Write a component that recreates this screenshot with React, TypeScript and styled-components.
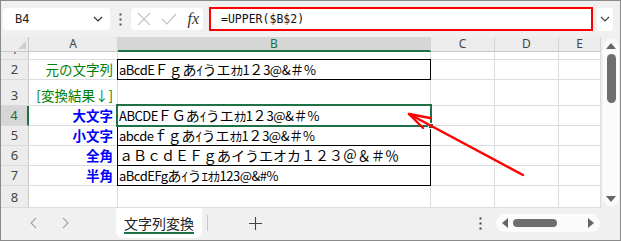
import styled, { createGlobalStyle } from "styled-components";

const GlobalStyle = createGlobalStyle`
  html, body { margin: 0; padding: 0; background: #fff; }
  body { font-family: "Noto Sans CJK JP", "Noto Sans", sans-serif; }
  * { box-sizing: border-box; }
`;

const GREEN = "#1e7145";

const Window = styled.div`
  width: 621px;
  height: 241px;
  border: 1px solid #8a8a8a;
  background: #f0f0f0;
  display: flex;
  flex-direction: column;
  overflow: hidden;
`;

const Toolbar = styled.div`
  height: 36px;
  flex: none;
  display: flex;
  align-items: center;
  padding-left: 2px;
  & > * { flex-shrink: 0; }
`;

const NameBox = styled.div`
  width: 107px;
  height: 22px;
  background: #fff;
  border-radius: 4px;
  display: flex;
  align-items: center;
  justify-content: space-between;
  padding: 0 7px 0 12px;
  font-family: "DejaVu Sans Mono", monospace;
  font-size: 12px;
  color: #222;
`;

const Dots = styled.div`
  width: 21px;
  display: flex;
  justify-content: center;
  color: #555;
`;

const FxBox = styled.div`
  width: 72px;
  height: 22px;
  background: #fff;
  border-radius: 4px;
  display: flex;
  align-items: center;
  justify-content: space-between;
  padding: 0 4px 0 6px;
`;

const FxLabel = styled.span`
  font-family: "Liberation Serif", serif;
  font-style: italic;
  font-size: 16px;
  color: #333;
  line-height: 1;
`;

const FormulaInput = styled.div`
  margin-left: 6px;
  width: 384px;
  height: 24px;
  border: 2px solid #ff0000;
  background: #fff;
  display: flex;
  align-items: center;
  padding-left: 10px;
  font-family: "DejaVu Sans Mono", monospace;
  font-size: 11.5px;
  color: #111;
`;

const ExpandBox = styled.div`
  margin-left: 4px;
  width: 16px;
  height: 23px;
  background: #fff;
  border-radius: 3px;
  display: flex;
  align-items: center;
  justify-content: center;
`;

const SheetArea = styled.div`
  height: 171px;
  flex: none;
  display: flex;
`;

const Grid = styled.div`
  position: relative;
  width: 600px;
  background: #fff;
  display: grid;
  grid-template-columns: 28px 89px 313px 64px 64px 42px;
  grid-template-rows: 15px 8px 20px 26px 20px 20px 20px 20px 22px;
`;

const Corner = styled.div`
  position: relative;
  background: #ececec;
  border-right: 1px solid #c8c8c8;
  border-bottom: 1px solid #c8c8c8;
  &::after {
    content: "";
    position: absolute;
    right: 2px;
    bottom: 2px;
    border-style: solid;
    border-width: 0 0 8px 8px;
    border-color: transparent transparent #cfcfcf transparent;
  }
`;

const ColHeader = styled.div<{ $selected?: boolean }>`
  background: ${({ $selected }) => ($selected ? "#d6d6d6" : "#ececec")};
  color: ${({ $selected }) => ($selected ? GREEN : "#444")};
  border-right: 1px solid #d4d4d4;
  border-bottom: ${({ $selected }) => ($selected ? `2px solid ${GREEN}` : "1px solid #c8c8c8")};
  display: flex;
  align-items: center;
  justify-content: center;
  font-family: "Noto Sans", sans-serif;
  font-size: 12px;
  line-height: 1;
`;

const RowHeader = styled.div<{ $selected?: boolean }>`
  background: ${({ $selected }) => ($selected ? "#d6d6d6" : "#ececec")};
  color: ${({ $selected }) => ($selected ? GREEN : "#444")};
  border-right: ${({ $selected }) => ($selected ? `2px solid ${GREEN}` : "1px solid #c8c8c8")};
  border-bottom: 1px solid #dadada;
  display: flex;
  align-items: flex-end;
  justify-content: center;
  overflow: hidden;
  font-family: "Noto Sans", sans-serif;
  font-size: 13px;
  line-height: 19px;
`;

const Cell = styled.div<{
  $right?: boolean;
  $bottom?: boolean;
  $color?: string;
  $bold?: boolean;
  $boxed?: boolean;
  $active?: boolean;
}>`
  position: relative;
  border-right: 1px solid #dcdcdc;
  border-bottom: 1px solid #dcdcdc;
  display: flex;
  align-items: ${({ $bottom }) => ($bottom ? "flex-end" : "center")};
  justify-content: ${({ $right }) => ($right ? "flex-end" : "flex-start")};
  padding: ${({ $right }) => ($right ? "0 4px 0 0" : "0 0 0 1px")};
  color: ${({ $color }) => $color || "#000"};
  font-weight: ${({ $bold }) => ($bold ? 700 : 400)};
  font-family: "Noto Sans CJK JP", sans-serif;
  font-size: ${({ $right }) => ($right ? "13.5px" : "14px")};
  line-height: 19px;
  white-space: nowrap;

  ${({ $boxed }) =>
    $boxed &&
    `&::before {
      content: "";
      position: absolute;
      top: -1px; left: -1px; right: -1px; bottom: -1px;
      border: 1px solid #000;
      pointer-events: none;
    }`}

  ${({ $active }) =>
    $active &&
    `&::after {
      content: "";
      position: absolute;
      top: -2px; left: -2px; right: -2px; bottom: -2px;
      border: 2px solid ${GREEN};
      z-index: 2;
      pointer-events: none;
    }`}
`;

// half-width glyphs (ascii, ｱｲｳ) are narrow in the sheet font
const Half = styled.span`
  font-size: 13px;
  letter-spacing: -0.5px;
`;

const FillHandle = styled.span`
  position: absolute;
  right: -4px;
  bottom: -4px;
  width: 6px;
  height: 6px;
  background: ${GREEN};
  border: 1px solid #fff;
  z-index: 3;
`;

const ArrowLayer = styled.svg`
  position: absolute;
  left: 0;
  top: 0;
  pointer-events: none;
  z-index: 4;
`;

const VScroll = styled.div`
  width: 19px;
  background: #f0f0f0;
  padding: 2px 1px 2px 2px;
`;

const VTrack = styled.div`
  height: 100%;
  background: #fbfbfb;
  border-radius: 8px;
  display: flex;
  flex-direction: column;
  align-items: center;
  padding: 3px 0 3px;
`;

const VThumb = styled.div`
  width: 9px;
  height: 49px;
  margin-top: 4px;
  border-radius: 5px;
  background: #6e6e6e;
`;

const Spacer = styled.div`
  flex: 1;
`;

const TabBar = styled.div`
  height: 32px;
  flex: none;
  display: flex;
  align-items: flex-start;
  padding-left: 16px;
  & > * { flex-shrink: 0; }
`;

const NavButton = styled.div`
  width: 32px;
  height: 30px;
  display: flex;
  align-items: center;
  justify-content: center;
`;

const SheetTab = styled.div`
  margin-left: 35px;
  width: 86px;
  height: 30px;
  background: #fff;
  border-radius: 0 0 7px 7px;
  display: flex;
  align-items: center;
  justify-content: center;
  font-size: 14px;
  color: #222;
`;

const TabLabel = styled.span`
  line-height: 17px;
  border-bottom: 2px solid ${GREEN};
  margin-top: 2px;
`;

const TabSeparator = styled.div`
  width: 1px;
  height: 16px;
  margin: 7px 0 0 5px;
  background: #c8c8c8;
`;

const AddButton = styled.div`
  width: 94px;
  height: 30px;
  display: flex;
  align-items: center;
  justify-content: center;
`;

const BarDots = styled.div`
  margin-left: 171px;
  width: 14px;
  height: 30px;
  display: flex;
  align-items: center;
  justify-content: center;
`;

const HScroll = styled.div`
  margin: 6px 0 0 9px;
  width: 104px;
  height: 18px;
  border-radius: 9px;
  background: #fbfbfb;
  display: flex;
  align-items: center;
  padding: 0 5px 0 5px;
`;

const HThumb = styled.div`
  width: 44px;
  height: 8px;
  margin-left: 4px;
  border-radius: 4px;
  background: #6e6e6e;
`;

const Chevron = ({ color = "#444" }: { color?: string }) => (
  <svg width="10" height="6" viewBox="0 0 10 6">
    <path d="M1 1l4 4 4-4" fill="none" stroke={color} strokeWidth="1.2" />
  </svg>
);

const VDots = ({ color = "#555" }: { color?: string }) => (
  <svg width="3" height="13" viewBox="0 0 3 13">
    <rect x="0.5" y="0.5" width="2" height="2" fill={color} />
    <rect x="0.5" y="5.5" width="2" height="2" fill={color} />
    <rect x="0.5" y="10.5" width="2" height="2" fill={color} />
  </svg>
);

const Tri = ({ dir }: { dir: "up" | "down" | "left" | "right" }) => {
  const pts = {
    up: "0,7 5,1 10,7",
    down: "0,1 5,7 10,1",
    left: "7,0 1,5 7,10",
    right: "1,0 7,5 1,10",
  }[dir];
  const vert = dir === "up" || dir === "down";
  return (
    <svg width={vert ? 10 : 8} height={vert ? 8 : 10} viewBox={vert ? "0 0 10 8" : "0 0 8 10"}>
      <polygon points={pts} fill="#666" />
    </svg>
  );
};

const isHalf = (ch: string) => {
  const c = ch.charCodeAt(0);
  return c < 0x2000 || (c >= 0xff61 && c <= 0xff9f);
};

// split a value into runs of half-width / full-width chars
const SheetText = ({ text }: { text: string }) => {
  const runs: { half: boolean; s: string }[] = [];
  for (const ch of text) {
    const h = isHalf(ch);
    const last = runs[runs.length - 1];
    if (last && last.half === h) last.s += ch;
    else runs.push({ half: h, s: ch });
  }
  return (
    <span>
      {runs.map((r, i) => (r.half ? <Half key={i}>{r.s}</Half> : <span key={i}>{r.s}</span>))}
    </span>
  );
};

type Row = {
  n: string;
  label?: string;
  labelColor?: string;
  bold?: boolean;
  bottom?: boolean;
  value?: string;
  active?: boolean;
};

const LBLUE = "#0000ff";
const LGREEN = "#008000";

const rows: Row[] = [
  { n: "1" },
  { n: "2", label: "元の文字列", labelColor: LGREEN, value: "aBcdEＦｇあｲうエｵｶ1２3@&＃%" },
  { n: "3", label: "[変換結果↓]", labelColor: LGREEN, bottom: true },
  { n: "4", label: "大文字", labelColor: LBLUE, bold: true, value: "ABCDEＦＧあｲうエｵｶ1２3@&＃%", active: true },
  { n: "5", label: "小文字", labelColor: LBLUE, bold: true, value: "abcdeｆｇあｲうエｵｶ1２3@&＃%" },
  { n: "6", label: "全角", labelColor: LBLUE, bold: true, value: "ａＢｃｄＥＦｇあイうエオカ１２３＠＆＃％" },
  { n: "7", label: "半角", labelColor: LBLUE, bold: true, value: "aBcdEFgあｲうｴｵｶ123@&#%" },
  { n: "8" },
];

const RowCells = ({ row }: { row: Row }) => (
  <>
    <RowHeader $selected={row.active}>
      <span>{row.n}</span>
    </RowHeader>
    <Cell $right $bottom={row.bottom} $color={row.labelColor} $bold={row.bold}>
      {row.label}
    </Cell>
    <Cell $boxed={!!row.value} $active={row.active}>
      {row.value && <SheetText text={row.value} />}
      {row.active && <FillHandle />}
    </Cell>
    <Cell />
    <Cell />
    <Cell />
  </>
);

export default function App() {
  return (
    <>
      <GlobalStyle />
      <Window>
        <Toolbar>
          <NameBox>
            <span>B4</span>
            <Chevron color="#333" />
          </NameBox>
          <Dots>
            <VDots />
          </Dots>
          <FxBox>
            <svg width="14" height="14" viewBox="0 0 14 14">
              <path d="M1 1l12 12M13 1L1 13" stroke="#c4c4c4" strokeWidth="1.2" />
            </svg>
            <svg width="16" height="14" viewBox="0 0 16 14">
              <path d="M1 7l5 5L15 2" fill="none" stroke="#c4c4c4" strokeWidth="1.2" />
            </svg>
            <FxLabel>fx</FxLabel>
          </FxBox>
          <FormulaInput>=UPPER($B$2)</FormulaInput>
          <ExpandBox>
            <Chevron />
          </ExpandBox>
        </Toolbar>

        <SheetArea>
          <Grid>
            <Corner />
            <ColHeader>A</ColHeader>
            <ColHeader $selected>B</ColHeader>
            <ColHeader>C</ColHeader>
            <ColHeader>D</ColHeader>
            <ColHeader>E</ColHeader>

            {rows.map((r) => (
              <RowCells key={r.n} row={r} />
            ))}

            <ArrowLayer width="600" height="171">
              <g stroke="#ff0000" strokeWidth="2.4" strokeLinecap="round" fill="none">
                <path d="M522 138L408 77" />
                <path d="M408 77L429 81" />
                <path d="M408 77L422 91" />
              </g>
            </ArrowLayer>
          </Grid>
          <VScroll>
            <VTrack>
              <Tri dir="up" />
              <VThumb />
              <Spacer />
              <Tri dir="down" />
            </VTrack>
          </VScroll>
        </SheetArea>

        <TabBar>
          <NavButton>
            <svg width="7" height="12" viewBox="0 0 7 12">
              <path d="M6 1L1 6l5 5" fill="none" stroke="#a8a8a8" strokeWidth="1.2" />
            </svg>
          </NavButton>
          <NavButton>
            <svg width="7" height="12" viewBox="0 0 7 12">
              <path d="M1 1l5 5-5 5" fill="none" stroke="#a8a8a8" strokeWidth="1.2" />
            </svg>
          </NavButton>
          <SheetTab>
            <TabLabel>文字列変換</TabLabel>
          </SheetTab>
          <TabSeparator />
          <AddButton>
            <svg width="13" height="13" viewBox="0 0 13 13">
              <path d="M6.5 0v13M0 6.5h13" stroke="#444" strokeWidth="1.1" />
            </svg>
          </AddButton>
          <BarDots>
            <VDots color="#444" />
          </BarDots>
          <HScroll>
            <Tri dir="left" />
            <HThumb />
            <Spacer />
            <Tri dir="right" />
          </HScroll>
        </TabBar>
      </Window>
    </>
  );
}
